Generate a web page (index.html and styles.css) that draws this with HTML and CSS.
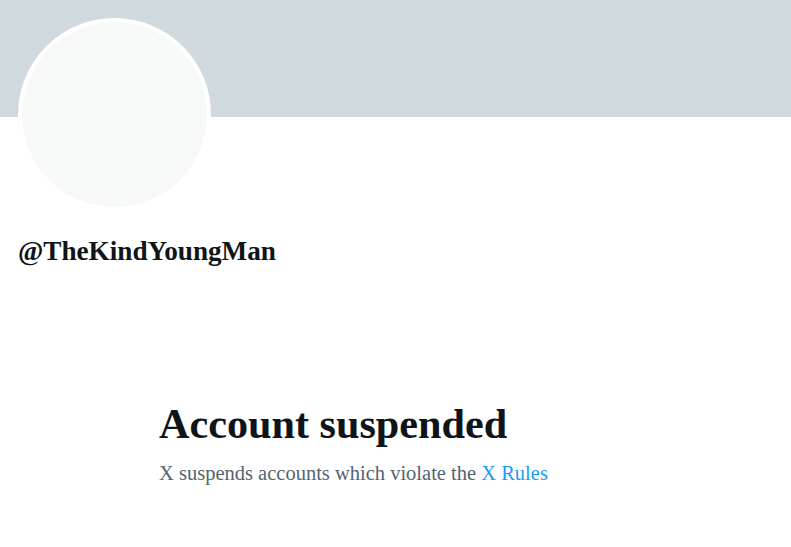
FILE: index.html
```html
<!DOCTYPE html>
<html>
<head>
<meta charset="utf-8">
<link rel="stylesheet" href="styles.css">
</head>
<body>
<div class="profile">
  <div class="banner"></div>
  <div class="header">
    <div class="avatar"></div>
    <div class="handle">@TheKindYoungMan</div>
  </div>
  <div class="empty">
    <h1 class="title">Account suspended</h1>
    <p class="sub">X suspends accounts which violate the <a class="link" href="#">X Rules</a></p>
  </div>
</div>
</body>
</html>
```
FILE: styles.css
```css
html, body {
  margin: 0;
  padding: 0;
  background: #ffffff;
  font-family: "Liberation Serif", "Times New Roman", serif;
}
.profile {
  width: 791px;
}
.banner {
  height: 117px;
  background: #cfd9de;
}
.header {
  padding: 0 18px;
}
.avatar {
  width: 185px;
  height: 185px;
  border-radius: 50%;
  background: #f7f9f9;
  border: 4px solid #ffffff;
  margin-top: -99px;
}
.handle {
  margin-top: 24px;
  font-size: 27.2px;
  font-weight: bold;
  color: #0f1419;
  line-height: 32px;
}
.empty {
  padding: 133px 0 0 159px;
}
.title {
  margin: 0;
  font-size: 42.2px;
  line-height: 48px;
  font-weight: bold;
  color: #0f1419;
}
.sub {
  margin: 13px 0 0;
  font-size: 20.5px;
  line-height: 24px;
  color: #536471;
}
.link {
  color: #1d9bf0;
  text-decoration: none;
}
```
